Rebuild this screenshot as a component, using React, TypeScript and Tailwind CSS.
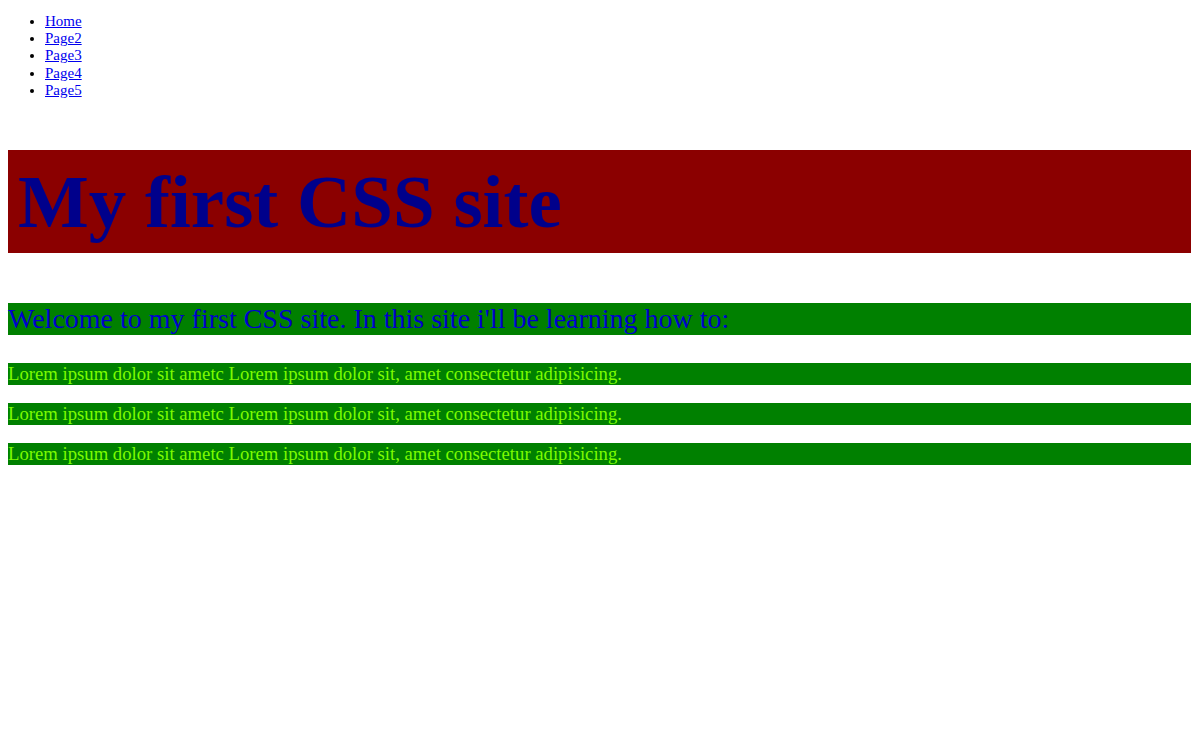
import React from 'react';

const links = ['Home', 'Page2', 'Page3', 'Page4', 'Page5'];

const lorem = 'Lorem ipsum dolor sit ametc Lorem ipsum dolor sit, amet consectetur adipisicing.';

export default function App() {
  return (
    <div className="min-h-[749px] bg-white px-[8px] pt-[13px] font-['Liberation_Serif','Times_New_Roman',serif]">
      <ul className="list-disc pl-[37px] text-[15px] leading-[17.2px]">
        {links.map((l) => (
          <li key={l}>
            <a href="#" className="text-[#0000ee] underline">
              {l}
            </a>
          </li>
        ))}
      </ul>

      <div className="mt-[51px] bg-[#8b0000] px-[10px] py-[10px]">
        <h1 className="text-[75px] font-bold leading-[83px] text-[#00008b]">My first CSS site</h1>
      </div>

      <h2 className="mt-[50px] bg-[#008000] text-[28px] leading-[32px] text-[#0000cd]">
        Welcome to my first CSS site. In this site i'll be learning how to:
      </h2>

      <div className="mt-[28px] flex flex-col gap-[18px]">
        {[0, 1, 2].map((i) => (
          <p key={i} className="bg-[#008000] text-[18.7px] leading-[22px] text-[#7cfc00]">
            {lorem}
          </p>
        ))}
      </div>
    </div>
  );
}
